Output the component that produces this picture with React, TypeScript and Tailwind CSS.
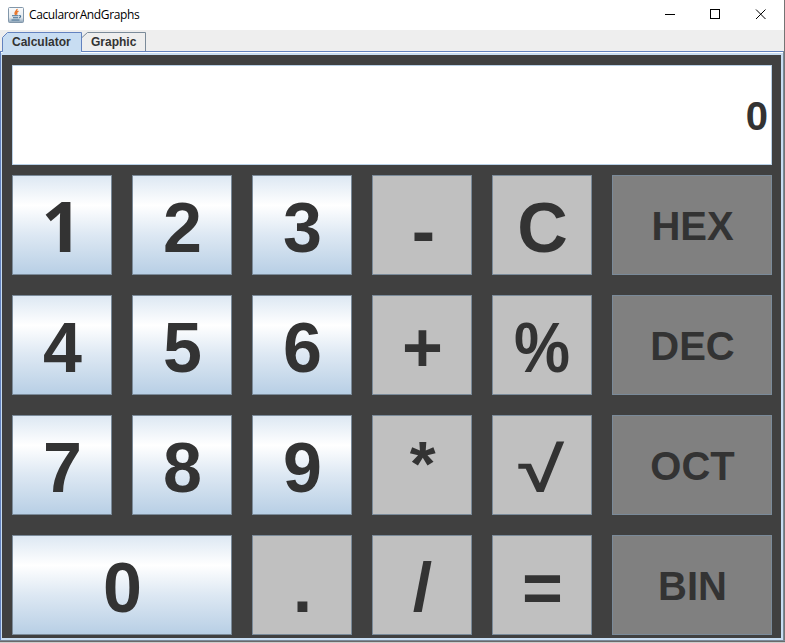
import React from "react";

type Kind = "num" | "op" | "mode";
type Key = { label: string; kind: Kind; span?: string; glyph?: string };

const keys: Key[] = [
  { label: "1", kind: "num", glyph: "font-['Open_Sans',sans-serif] -translate-x-px -translate-y-[3px]" },
  { label: "2", kind: "num" },
  { label: "3", kind: "num" },
  { label: "-", kind: "op", glyph: "translate-x-px translate-y-[3px]" },
  { label: "C", kind: "op" },
  { label: "HEX", kind: "mode" },
  { label: "4", kind: "num" },
  { label: "5", kind: "num" },
  { label: "6", kind: "num" },
  { label: "+", kind: "op" },
  { label: "%", kind: "op", glyph: "scale-x-90" },
  { label: "DEC", kind: "mode" },
  { label: "7", kind: "num" },
  { label: "8", kind: "num" },
  { label: "9", kind: "num" },
  { label: "*", kind: "op", glyph: "-translate-y-[5px] scale-x-95 scale-y-90" },
  { label: "√", kind: "op", glyph: "-translate-x-px scale-x-[1.19] scale-y-[0.9] translate-y-px" },
  { label: "OCT", kind: "mode" },
  { label: "0", kind: "num", span: "col-span-2" },
  { label: ".", kind: "op" },
  { label: "/", kind: "op", glyph: "scale-y-[0.97]" },
  { label: "=", kind: "op" },
  { label: "BIN", kind: "mode" },
];

const look: Record<Kind, string> = {
  num: "text-[70px] pt-[5px] pl-px bg-[linear-gradient(to_bottom,#dde8f3_0%,#ffffff_30%,#dde8f3_60%,#b8cfe5_100%)]",
  op: "text-[70px] pt-[5px] pl-px bg-[#c0c0c0]",
  mode: "text-[40px] pt-[2px] pl-px bg-[#808080]",
};

function JavaIcon() {
  return (
    <svg width="16" height="16" viewBox="0 0 16 16" fill="none">
      <defs>
        <linearGradient id="tile" x1="0" y1="0" x2="0" y2="1">
          <stop offset="0" stopColor="#fafbfc" />
          <stop offset="0.65" stopColor="#e6ebef" />
          <stop offset="1" stopColor="#8ba3b8" />
        </linearGradient>
      </defs>
      <rect x="0.5" y="0.5" width="15" height="15" rx="1" fill="url(#tile)" stroke="#8297aa" />
      <path d="M9 2C9.5 4 5.5 4.5 7.6 8M10.5 4.2C8.5 5 8.2 6 9 7.6" stroke="#e8762c" strokeWidth="1.4" />
      <path d="M4 8.7H10.5M5 10.7H10M3.5 13H11.5M11 8.8C13.5 8.2 13 10.6 10.8 11" stroke="#3f6b90" strokeWidth="1.1" />
    </svg>
  );
}

export default function App() {
  return (
    <div className="flex h-[643px] w-[785px] flex-col overflow-hidden bg-white font-['Liberation_Sans',Arial,sans-serif] text-[#333333]">
      <div className="flex h-[51px] shrink-0 border-r border-[#747474]">
        <div className="flex min-w-0 flex-1 flex-col">
          <header className="flex h-[30px] shrink-0 items-center bg-white pl-2">
            <JavaIcon />
            <span className="ml-[5px] font-['Open_Sans','Noto_Sans',sans-serif] text-[12px] leading-4 tracking-[-0.38px] text-black">
              CacularorAndGraphs
            </span>
            <svg className="ml-auto" width="140" height="30" fill="none" stroke="#000">
              <path d="M21 14.5H31" />
              <rect x="66.5" y="9.5" width="9" height="9" />
              <path d="M112 9.5L121.5 19M121.5 9.5L112 19" />
            </svg>
          </header>
          <nav className="flex h-[21px] shrink-0 items-end bg-[#eeeeee] text-[12px] font-bold">
            <div className="relative z-10 flex h-[19px] w-[82px] items-center pl-[12px]">
              <svg className="absolute left-0 top-0 overflow-visible" width="82" height="21">
                <path d="M2.5 21V5.5L7.5 0.5H81.5V19.5H81V21" fill="#c8ddf2" />
                <path d="M2.5 19.5V5.5L7.5 0.5H81.5V19.5" fill="none" stroke="#6382bf" />
              </svg>
              <span className="relative leading-4">Calculator</span>
            </div>
            <div className="relative flex h-[19px] w-[64px] items-center pl-[9px]">
              <svg className="absolute left-0 top-0" width="64" height="19">
                <path d="M0 5.5L5.5 0.5H63.5V19" fill="#eeeeee" stroke="#7a8a99" />
              </svg>
              <span className="relative leading-4">Graphic</span>
            </div>
          </nav>
        </div>
      </div>
      <div className="flex min-h-0 flex-1">
        <main className="flex min-h-0 flex-1 flex-col border-l border-t border-[#6382bf] bg-white pt-px">
          <div className="flex min-h-0 flex-1 flex-col border-b-2 border-l border-r-2 border-t-2 border-[#c8ddf2]">
            <div className="flex min-h-0 flex-1 flex-col bg-[#404040] pl-[10px] pt-[10px]">
              <div className="flex h-[100px] w-[760px] shrink-0 items-center justify-end border border-[#b8cfe5] bg-white pr-[3px] pt-[2px] text-[40px] font-bold">
                0
              </div>
              <div className="mt-[10px] grid w-[760px] grid-cols-[repeat(5,100px)_160px] grid-rows-[repeat(4,100px)] gap-5">
                {keys.map((k) => (
                  <button
                    key={k.label}
                    className={`flex items-center justify-center border border-[#7a8a99] font-bold leading-none ${look[k.kind]} ${k.span ?? ""}`}
                  >
                    <span className={k.glyph}>{k.label}</span>
                  </button>
                ))}
              </div>
            </div>
          </div>
        </main>
        <div className="w-px bg-[#7a8a99]" />
        <div className="w-px bg-[#747474]" />
      </div>
      <div className="h-px bg-[#7a8a99]" />
      <div className="h-px bg-[#6a6a6a]" />
      <div className="h-px bg-[#cccccc]" />
    </div>
  );
}
